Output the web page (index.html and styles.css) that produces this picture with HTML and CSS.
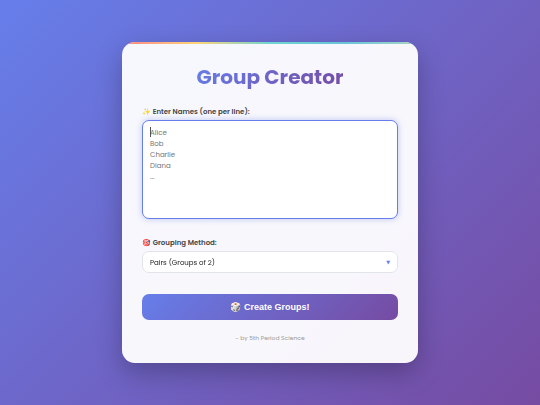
FILE: index.html
```html
<!DOCTYPE html>
<html lang="en">
<head>
  <meta charset="UTF-8" />
  <meta name="viewport" content="width=device-width, initial-scale=1.0" />
  <title>Group Creator</title>
  <link rel="stylesheet" href="styles.css">
</head>
<body>
  <main class="container">
    <h1><span class="title-text">Group Creator</span></h1>

    <form id="groupForm">
      <div class="field">
        <label for="names">✨ Enter Names (one per line):</label>
        <div class="names-wrapper">
          <textarea id="names" placeholder="Alice&#10;Bob&#10;Charlie&#10;Diana&#10;..." autofocus></textarea>
        </div>
      </div>

      <div class="field">
        <label for="method">🎯 Grouping Method:</label>
        <div class="select-wrapper">
          <select id="method">
            <option value="pairs">Pairs (Groups of 2)</option>
            <option value="threes">Groups of 3</option>
            <option value="fours">Groups of 4</option>
          </select>
        </div>
      </div>

      <button type="submit" class="create-btn">🎲 Create Groups!</button>
    </form>

    <footer>- by 5th Period Science</footer>
  </main>

  <script>
    document.getElementById('groupForm').addEventListener('submit', e => e.preventDefault());
    document.getElementById('names').focus();
  </script>
</body>
</html>
```

FILE: styles.css
```css
* {
  box-sizing: border-box;
}
body {
  margin: 0;
  min-height: 100vh;
  display: flex;
  align-items: center;
  justify-content: center;
  font-family: Poppins, Inter, sans-serif;
  background: linear-gradient(135deg, #667eea 0%, #764ba2 100%);
}
.container {
  position: relative;
  width: 100%;
  max-width: 296px;
  padding: 20px 20px 19px;
  overflow: hidden;
  background: rgba(255, 255, 255, 0.95);
  border-radius: 13px;
  box-shadow: 0 10px 26px rgba(0, 0, 0, 0.25);
}
/* rainbow strip along the top edge */
.container::before {
  content: "";
  position: absolute;
  top: 0;
  left: 0;
  right: 0;
  height: 2px;
  background: linear-gradient(90deg, #ff6b6b, #feca57, #4ecdc4, #45b7d1, #96ceb4);
  opacity: 0.8;
}
h1 {
  margin: 0 0 14px;
  font-size: 20px;
  line-height: 30px;
  font-weight: 700;
  text-align: center;
}
.title-text {
  background: linear-gradient(135deg, #667eea, #764ba2);
  -webkit-background-clip: text;
  background-clip: text;
  color: transparent;
}
.field {
  margin-bottom: 18px;
}
label {
  display: block;
  margin-bottom: 2px;
  font-size: 7px;
  line-height: 12px;
  font-weight: 600;
  color: #444;
}
textarea, select {
  display: block;
  width: 100%;
  border: 1px solid #e1e5e9;
  border-radius: 7px;
  background: #fff;
  font-family: inherit;
  font-size: 7px;
  color: #222;
}
textarea {
  height: 99px;
  padding: 6px 7px;
  line-height: 11px;
  resize: none;
  caret-color: transparent;
}
textarea::placeholder {
  color: #757575;
}
textarea:focus, select:focus {
  outline: none;
  border-color: #667eea;
  box-shadow: 0 0 6px rgba(102, 126, 234, 0.4);
}
.names-wrapper, .select-wrapper {
  position: relative;
}
/* caret for the empty, focused box */
.names-wrapper:has(textarea:focus:placeholder-shown)::before {
  content: "";
  position: absolute;
  top: 7px;
  left: 8px;
  width: 1px;
  height: 10px;
  background: #555;
}
textarea:not(:placeholder-shown) {
  caret-color: auto;
}
.select-wrapper::after {
  content: "▼";
  position: absolute;
  top: 0;
  right: 8px;
  font-family: "DejaVu Sans", sans-serif;
  font-size: 5px;
  line-height: 22px;
  color: #667eea;
  pointer-events: none;
}
select {
  height: 22px;
  padding: 0 7px;
  appearance: none;
}
.create-btn {
  display: block;
  width: 100%;
  height: 26px;
  margin-top: 21px;
  padding: 0;
  border: none;
  border-radius: 7px;
  background: linear-gradient(135deg, #667eea 0%, #764ba2 100%);
  font-family: "Liberation Sans", Arial, sans-serif;
  font-size: 9px;
  font-weight: 700;
  color: #fff;
  cursor: pointer;
}
footer {
  margin-top: 12px;
  font-size: 6px;
  line-height: 12px;
  text-align: center;
  color: #999;
}
```
